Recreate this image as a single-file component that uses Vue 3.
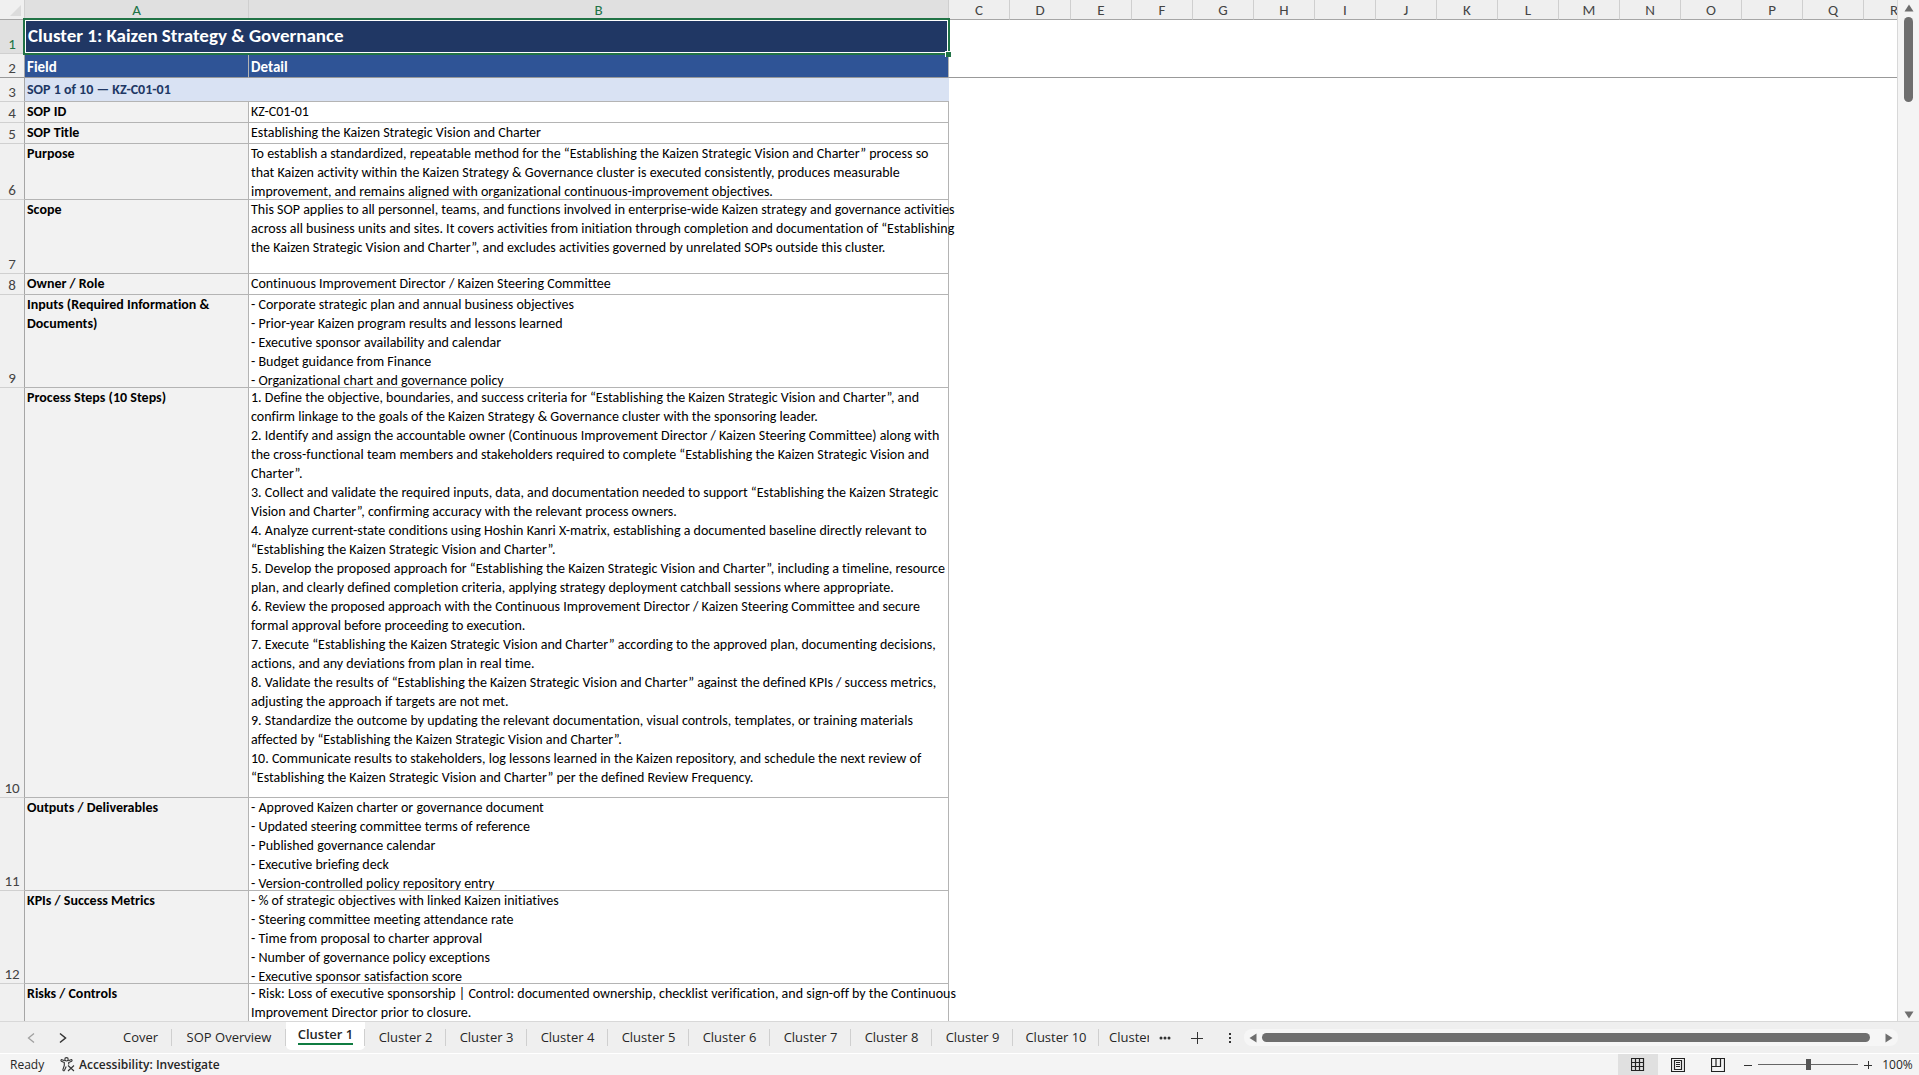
<script setup>
import { ref } from 'vue'

const zoom = ref(100)
const columns = [
  { name: 'A', width: 224, active: true },
  { name: 'B', width: 700, active: true },
  ...'CDEFGHIJKLMNOPQR'.split('').map((name) => ({ name, width: 61, active: false })),
]

const rows = [
  { n: 4, h: 21, field: ['SOP ID'], detail: ['KZ-C01-01'] },
  { n: 5, h: 21, field: ['SOP Title'], detail: ['Establishing the Kaizen Strategic Vision and Charter'] },
  {
    n: 6, h: 56, field: ['Purpose'],
    detail: [
      'To establish a standardized, repeatable method for the “Establishing the Kaizen Strategic Vision and Charter” process so',
      'that Kaizen activity within the Kaizen Strategy & Governance cluster is executed consistently, produces measurable',
      'improvement, and remains aligned with organizational continuous-improvement objectives.',
    ],
  },
  {
    n: 7, h: 74, field: ['Scope'],
    detail: [
      'This SOP applies to all personnel, teams, and functions involved in enterprise-wide Kaizen strategy and governance activities',
      'across all business units and sites. It covers activities from initiation through completion and documentation of “Establishing',
      'the Kaizen Strategic Vision and Charter”, and excludes activities governed by unrelated SOPs outside this cluster.',
    ],
  },
  { n: 8, h: 21, field: ['Owner / Role'], detail: ['Continuous Improvement Director / Kaizen Steering Committee'] },
  {
    n: 9, h: 93, field: ['Inputs (Required Information &', 'Documents)'],
    detail: [
      '- Corporate strategic plan and annual business objectives',
      '- Prior-year Kaizen program results and lessons learned',
      '- Executive sponsor availability and calendar',
      '- Budget guidance from Finance',
      '- Organizational chart and governance policy',
    ],
  },
  {
    n: 10, h: 410, field: ['Process Steps (10 Steps)'],
    detail: [
      '1. Define the objective, boundaries, and success criteria for “Establishing the Kaizen Strategic Vision and Charter”, and',
      'confirm linkage to the goals of the Kaizen Strategy & Governance cluster with the sponsoring leader.',
      '2. Identify and assign the accountable owner (Continuous Improvement Director / Kaizen Steering Committee) along with',
      'the cross-functional team members and stakeholders required to complete “Establishing the Kaizen Strategic Vision and',
      'Charter”.',
      '3. Collect and validate the required inputs, data, and documentation needed to support “Establishing the Kaizen Strategic',
      'Vision and Charter”, confirming accuracy with the relevant process owners.',
      '4. Analyze current-state conditions using Hoshin Kanri X-matrix, establishing a documented baseline directly relevant to',
      '“Establishing the Kaizen Strategic Vision and Charter”.',
      '5. Develop the proposed approach for “Establishing the Kaizen Strategic Vision and Charter”, including a timeline, resource',
      'plan, and clearly defined completion criteria, applying strategy deployment catchball sessions where appropriate.',
      '6. Review the proposed approach with the Continuous Improvement Director / Kaizen Steering Committee and secure',
      'formal approval before proceeding to execution.',
      '7. Execute “Establishing the Kaizen Strategic Vision and Charter” according to the approved plan, documenting decisions,',
      'actions, and any deviations from plan in real time.',
      '8. Validate the results of “Establishing the Kaizen Strategic Vision and Charter” against the defined KPIs / success metrics,',
      'adjusting the approach if targets are not met.',
      '9. Standardize the outcome by updating the relevant documentation, visual controls, templates, or training materials',
      'affected by “Establishing the Kaizen Strategic Vision and Charter”.',
      '10. Communicate results to stakeholders, log lessons learned in the Kaizen repository, and schedule the next review of',
      '“Establishing the Kaizen Strategic Vision and Charter” per the defined Review Frequency.',
    ],
  },
  {
    n: 11, h: 93, field: ['Outputs / Deliverables'],
    detail: [
      '- Approved Kaizen charter or governance document',
      '- Updated steering committee terms of reference',
      '- Published governance calendar',
      '- Executive briefing deck',
      '- Version-controlled policy repository entry',
    ],
  },
  {
    n: 12, h: 93, field: ['KPIs / Success Metrics'],
    detail: [
      '- % of strategic objectives with linked Kaizen initiatives',
      '- Steering committee meeting attendance rate',
      '- Time from proposal to charter approval',
      '- Number of governance policy exceptions',
      '- Executive sponsor satisfaction score',
    ],
  },
  {
    n: '', h: 93, field: ['Risks / Controls'],
    detail: [
      '- Risk: Loss of executive sponsorship | Control: documented ownership, checklist verification, and sign-off by the Continuous',
      'Improvement Director prior to closure.',
    ],
  },
]

const active = ref('Cluster 1')
const tabs = ['Cover', 'SOP Overview', ...Array.from({ length: 10 }, (_, i) => `Cluster ${i + 1}`)]
const tabWidth = (t) => ({ Cover: 63, 'SOP Overview': 114, 'Cluster 1': 79, 'Cluster 10': 86 })[t] ?? 81
</script>

<template>
  <div class="app">
    <main class="workspace">
      <div class="sheet">
        <table>
          <colgroup>
            <col class="gutter" />
            <col v-for="c in columns" :key="c.name" :style="{ width: c.width + 'px' }" />
          </colgroup>
          <thead>
            <tr>
              <th class="corner"><svg width="11" height="11" viewBox="0 0 11 11"><path d="M11 0V11H0Z" fill="#dcdcdc" /></svg></th>
              <th v-for="c in columns" :key="c.name" scope="col" class="col" :class="{ on: c.active }">{{ c.name }}</th>
            </tr>
          </thead>
          <tbody>
            <tr class="r1">
              <th scope="row" class="num on">1</th>
              <td colspan="2" class="title">
                Cluster 1: Kaizen Strategy &amp; Governance
                <span class="ring"></span><span class="handle"></span>
              </td>
              <td colspan="16"></td>
            </tr>
            <tr class="r2">
              <th scope="row" class="num">2</th>
              <td class="head">Field</td>
              <td class="head">Detail</td>
              <td colspan="16" class="frozen"></td>
            </tr>
            <tr class="r3">
              <th scope="row" class="num">3</th>
              <td colspan="2" class="sop">SOP 1 of 10 — KZ-C01-01</td>
              <td colspan="16"></td>
            </tr>
            <tr v-for="r in rows" :key="r.n" :style="{ height: r.h + 'px' }">
              <th scope="row" class="num">{{ r.n }}</th>
              <td class="cell field">
                <div class="clip" :style="{ height: r.h - 1 + 'px' }"><p v-for="l in r.field" :key="l">{{ l }}</p></div>
              </td>
              <td class="cell">
                <div class="clip" :style="{ height: r.h - 1 + 'px' }"><p v-for="l in r.detail" :key="l">{{ l }}</p></div>
              </td>
              <td colspan="16"></td>
            </tr>
          </tbody>
        </table>
      </div>
      <div class="vscroll">
        <svg width="10" height="8" viewBox="0 0 10 8"><path d="M5 0.5L9.5 7.5H0.5Z" fill="#6e6e6e" /></svg>
        <div class="vtrack"><div class="vthumb"></div></div>
        <svg width="10" height="8" viewBox="0 0 10 8"><path d="M5 7.5L9.5 0.5H0.5Z" fill="#6e6e6e" /></svg>
      </div>
    </main>

    <nav class="tabbar" aria-label="Sheets">
      <button class="arrow" aria-label="Previous sheets"><svg width="8" height="12" viewBox="0 0 8 12"><path d="M7 1.500L1.500 6L7 10.500" fill="none" stroke="#a0a0a0" stroke-width="1.3" /></svg></button>
      <button class="arrow" aria-label="Next sheets"><svg width="8" height="12" viewBox="0 0 8 12"><path d="M1 1.500L6.500 6L1 10.500" fill="none" stroke="#333" stroke-width="1.5" /></svg></button>
      <div class="tabs">
        <button
          v-for="t in tabs" :key="t" class="tab" :class="{ current: t === active }"
          :style="{ width: tabWidth(t) + 'px' }" @click="active = t"
        ><span>{{ t }}</span></button>
        <button class="tab cut"><span>Cluster 11</span></button>
      </div>
      <button class="more" aria-label="More sheets"><svg width="12" height="4" viewBox="0 0 12 4"><g fill="#333"><circle cx="2" cy="2" r="1.5" /><circle cx="6" cy="2" r="1.5" /><circle cx="10" cy="2" r="1.5" /></g></svg></button>
      <button class="add" aria-label="New sheet"><svg width="12" height="12" viewBox="0 0 12 12"><path d="M6.5 0V12M0 6.5H12" stroke="#333" stroke-width="1" /></svg></button>
      <span class="grip"><svg width="4" height="12" viewBox="0 0 4 12"><path d="M1 1h2v2H1zM1 5h2v2H1zM1 9h2v2H1z" fill="#333" /></svg></span>
      <div class="hscroll">
        <svg width="8" height="10" viewBox="0 0 8 10"><path d="M0.5 5L7.5 0.5V9.5Z" fill="#6e6e6e" /></svg>
        <div class="hthumb"></div>
        <svg width="8" height="10" viewBox="0 0 8 10"><path d="M7.5 5L0.5 0.5V9.5Z" fill="#6e6e6e" /></svg>
      </div>
    </nav>

    <footer class="status">
      <span class="ready">Ready</span>
      <button class="access">
        <svg width="15" height="15" viewBox="0 0 15 15" fill="none" stroke="#333" stroke-width="1.1">
          <circle cx="6.500" cy="2.300" r="1.700" />
          <path d="M4.800 3.800L2 2.700C1 2.400 .5 3.700 1.400 4.200L4.300 5.600V8.400L2.900 12.600C2.700 13.800 4 14.200 4.500 13.200L6.200 9.600M8.200 3.800L11 2.700C12 2.400 12.500 3.700 11.600 4.200L8.700 5.600V7.500" />
          <path d="M8 8.500L14 14M14 8.500L8 14" />
        </svg>
        Accessibility: Investigate
      </button>
      <div class="views">
        <button class="view pressed" aria-label="Normal"><svg width="14" height="14" viewBox="0 0 14 14"><path d="M.5 .5H12.500V12.500H.5ZM.5 4.500H12.500M.5 8.500H12.500M4.500 .5V12.500M8.500 .5V12.500" fill="none" stroke="#222" stroke-width="1.2" /></svg></button>
        <button class="view" aria-label="Page layout"><svg width="14" height="14" viewBox="0 0 14 14"><path d="M.5 .5H13.500V13.500H.5ZM3.500 2.500H10.500V11.500H3.500ZM5 4.500H9M5 6.500H9M5 8.500H9" fill="none" stroke="#222" stroke-width="1.2" /></svg></button>
        <button class="view" aria-label="Page break preview"><svg width="14" height="14" viewBox="0 0 14 14"><path d="M.5 .5H13.500V13.500H.5ZM.5 8.500H9.500V.5M5 .5V8.500" fill="none" stroke="#222" stroke-width="1.2" /></svg></button>
      </div>
      <button class="step" aria-label="Zoom out" @click="zoom -= 10"><svg width="8" height="8" viewBox="0 0 8 8"><path d="M0 4.500H8" stroke="#333" /></svg></button>
      <input v-model.number="zoom" class="slider" type="range" min="0" max="200" aria-label="Zoom" />
      <button class="step" aria-label="Zoom in" @click="zoom += 10"><svg width="8" height="8" viewBox="0 0 8 8"><path d="M0 4.500H8M4.500 0V8" stroke="#333" /></svg></button>
      <span class="pct">{{ zoom }}%</span>
    </footer>
  </div>
</template>

<style>
body { margin: 0; background: #f0f0f0; }
</style>

<style scoped>
* { box-sizing: border-box; }
.app { height: 100vh; display: flex; flex-direction: column; overflow: hidden; font-family: "Open Sans", "Noto Sans", sans-serif; color: #262626; }
button { border: 0; padding: 0; background: none; font: inherit; color: inherit; display: flex; align-items: center; justify-content: center; white-space: nowrap; }
.workspace { flex: 1; min-height: 0; display: flex; }
.sheet { flex: 1; min-width: 0; overflow: hidden; background: #fff; border-right: 1px solid #d8d8d8; font-family: Carlito, Lato, "Liberation Sans", sans-serif; font-variant-ligatures: none; }
table { table-layout: fixed; width: 1925px; border-collapse: separate; border-spacing: 0; }
.gutter { width: 25px; }
th, td { padding: 0; }
thead tr { height: 20px; }
.corner { background: #f0f0f0; border-right: 1px solid #d0d0d0; border-bottom: 1px solid #a6a6a6; text-align: right; vertical-align: bottom; padding: 0 3px 3px 0; line-height: 0; }
.col { background: #efefef; border-right: 1px solid #cfcfcf; border-bottom: 1px solid #a6a6a6; font-size: 15px; line-height: 18px; padding-top: 1px; font-weight: 400; color: #444; }
.col.on, .num.on { background: #e0e0e0; color: #217346; }
.num { background: #f0f0f0; border-right: 1px solid #a6a6a6; border-bottom: 1px solid #d0d0d0; vertical-align: bottom; font-size: 15px; line-height: 18px; font-weight: 400; color: #444; }
.r1 { height: 34px; }
.r2, .r3 { height: 24px; }
.r2 .num, .frozen { border-bottom: 1px solid #999; }
.title { position: relative; background: #203764; color: #fff; font-size: 19px; line-height: 24px; font-weight: 700; padding: 0 0 2px 3px; }
.ring { position: absolute; inset: -2px -1px -1px -2px; border: 2px solid #217346; box-shadow: inset 0 0 0 1px #fff; }
.handle { position: absolute; right: -2px; bottom: -3px; width: 6px; height: 6px; background: #217346; border: 1px solid #fff; border-width: 1px 0 0 1px; }
.head { background: #2f5496; color: #fff; font-size: 15px; line-height: 20px; font-weight: 700; padding: 2px 0 0 2px; border-right: 1px solid #b4b4b4; border-bottom: 1px solid #999; }
.sop { background: #d9e2f3; color: #203764; font-size: 14px; font-weight: 700; padding-left: 2px; border-bottom: 1px solid #b4b4b4; }
.cell { vertical-align: top; border-right: 1px solid #b4b4b4; border-bottom: 1px solid #b4b4b4; font-size: 14px; color: #000; }
.field { background: #f2f2f2; font-weight: 700; }
.clip { overflow-x: visible; overflow-y: clip; padding-left: 2px; }
.clip p { margin: 0; line-height: 19px; white-space: pre; }
.vscroll { width: 21px; display: flex; flex-direction: column; align-items: center; padding: 4px 0 2px; background: #f4f4f4; }
.vtrack { flex: 1; padding: 5px 0; }
.vthumb { width: 9px; height: 85px; border-radius: 5px; background: #6e6e6e; }
.tabbar { height: 33px; flex: none; display: flex; align-items: center; background: #efefef; border-top: 1px solid #d8d8d8; border-bottom: 1px solid #fff; }
.arrow { width: 32px; height: 24px; }
.arrow:first-child { margin-left: 15px; }
.tabs { display: flex; align-self: stretch; margin-left: 30px; }
.tab { position: relative; font-size: 13px; padding-bottom: 2px; }
.tab::after { content: ""; position: absolute; right: 0; top: 7px; height: 17px; width: 1px; background: #cfcfcf; }
.tab.cut { width: 50px; margin-right: 2px; padding-left: 10px; justify-content: flex-start; overflow: hidden; }
.tab.cut::after { display: none; }
.tab.current { font-weight: 600; height: 28px; padding-bottom: 2px; background: #fff; border-radius: 0 0 5px 5px; }
.tab.current span { border-bottom: 2px solid #107c41; }
.more { width: 28px; height: 24px; }
.add { width: 36px; height: 24px; }
.grip { width: 29px; display: flex; justify-content: center; }
.hscroll { flex: 1; height: 17px; margin: 0 21px 0 0; display: flex; align-items: center; gap: 5px; padding: 0 5px; background: #f6f6f6; border-radius: 8px; }
.hthumb { flex: 1; height: 9px; margin-right: 10px; border-radius: 5px; background: #6e6e6e; }
.status { height: 21px; flex: none; display: flex; align-items: center; background: #f4f4f4; font-size: 12px; }
.ready { padding-left: 10px; width: 60px; }
.access { gap: 4px; font-weight: 600; }
.views { margin-left: auto; display: flex; }
.view { width: 40px; height: 21px; }
.pressed { background: #e0e0e0; }
.step { width: 20px; height: 20px; }
.slider { appearance: none; width: 100px; height: 14px; margin: 0; background: linear-gradient(#666, #666) center / 100% 1px no-repeat; }
.slider::-webkit-slider-thumb { appearance: none; width: 5px; height: 11px; background: #555; }
.pct { width: 41px; padding-right: 2px; text-align: center; }
</style>
